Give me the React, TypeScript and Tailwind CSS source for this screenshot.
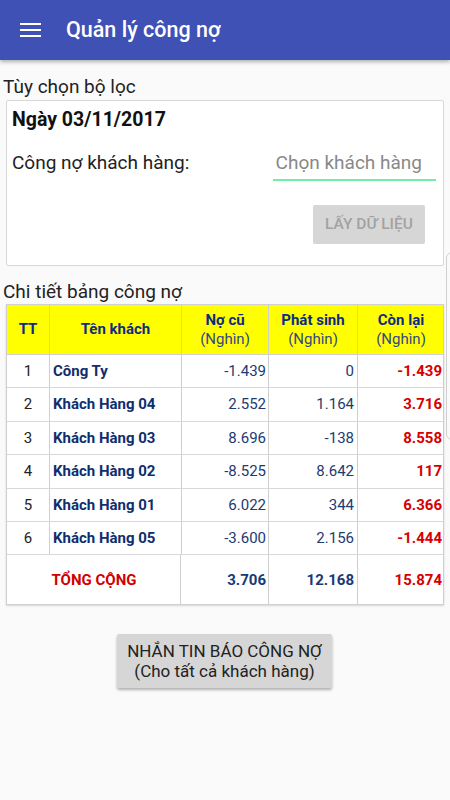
import React from "react";

const rows = [
  { tt: "1", name: "Công Ty", no: "-1.439", ps: "0", cl: "-1.439" },
  { tt: "2", name: "Khách Hàng 04", no: "2.552", ps: "1.164", cl: "3.716" },
  { tt: "3", name: "Khách Hàng 03", no: "8.696", ps: "-138", cl: "8.558" },
  { tt: "4", name: "Khách Hàng 02", no: "-8.525", ps: "8.642", cl: "117" },
  { tt: "5", name: "Khách Hàng 01", no: "6.022", ps: "344", cl: "6.366" },
  { tt: "6", name: "Khách Hàng 05", no: "-3.600", ps: "2.156", cl: "-1.444" },
];

export default function App() {
  return (
    <div className="relative w-[450px] h-[800px] overflow-hidden bg-[#fafafa] font-['Roboto',sans-serif]">
      {/* App bar */}
      <div className="h-[60px] bg-[#3f51b5] flex items-center shadow-[0_2px_4px_rgba(0,0,0,0.3)] relative z-10">
        <div className="ml-[20px] w-[21px] flex flex-col gap-[4px]">
          <div className="h-[2px] bg-white" />
          <div className="h-[2px] bg-white" />
          <div className="h-[2px] bg-white" />
        </div>
        <div className="ml-[25px] text-white text-[21.5px] font-medium leading-none">Quản lý công nợ</div>
      </div>

      <div className="pt-[16px] px-[6px]">
        <div className="text-[19px] leading-[22px] text-[#222] -ml-[3px]">Tùy chọn bộ lọc</div>
        <div className="mt-[2px] h-[166px] bg-white border border-[#d8d8d8] rounded-[2px] px-[5px] pt-[8px]">
          <div className="text-[19.5px] leading-[22px] font-bold text-[#111]">Ngày 03/11/2017</div>
          <div className="mt-[21px] flex items-start justify-between">
            <div className="text-[19px] leading-[22px] text-[#222]">Công nợ khách hàng:</div>
            <div className="mr-[2px] w-[163px] border-b-2 border-[#6ff0a6] pb-[3px] text-right">
              <span className="text-[19px] leading-[22px] text-[#888] pr-[14px]">Chọn khách hàng</span>
            </div>
          </div>
          <div className="mt-[24px] flex justify-end">
            <div className="mr-[13px] w-[112px] h-[39px] bg-[#d6d6d6] rounded-[2px] flex items-center justify-center text-[15.5px] font-medium text-[#a2a2a2]">
              LẤY DỮ LIỆU
            </div>
          </div>
        </div>

        <div className="mt-[15px] text-[19px] leading-[22px] text-[#222] -ml-[3px]">Chi tiết bảng công nợ</div>

        {/* Table */}
        <div className="mt-[1px] w-[438px] bg-white border border-[#cfcfcf] shadow-[0_1px_2px_rgba(0,0,0,0.15)]">
          <div className="grid grid-cols-[43px_132px_87px_89px_86px] h-[50px] bg-[#ffff00] text-[15px] text-[#0c2c86] border-b border-[#cfcfcf]">
            <div className="flex items-center justify-center font-bold border-r border-[#cfcfcf]">TT</div>
            <div className="flex items-center justify-center font-bold border-r border-[#cfcfcf]">Tên khách</div>
            {["Nợ cũ", "Phát sinh", "Còn lại"].map((h, i) => (
              <div key={h} className={`flex flex-col items-center justify-center leading-[19px] ${i < 2 ? "border-r border-[#cfcfcf]" : ""}`}>
                <span className="font-bold">{h}</span>
                <span className="text-[#34478a]">(Nghìn)</span>
              </div>
            ))}
          </div>
          {rows.map((r) => (
            <div key={r.tt} className="grid grid-cols-[43px_132px_87px_89px_86px] h-[33.4px] text-[15px] border-b border-[#d8d8d8]">
              <div className="flex items-center justify-center text-[#222] border-r border-[#cfcfcf]">{r.tt}</div>
              <div className="flex items-center pl-[3px] font-bold text-[#0f2e6e] border-r border-[#cfcfcf]">{r.name}</div>
              <div className="flex items-center justify-end pr-[2px] text-[#1d3a72] border-r border-[#cfcfcf]">{r.no}</div>
              <div className="flex items-center justify-end pr-[3px] text-[#1d3a72] border-r border-[#cfcfcf]">{r.ps}</div>
              <div className="flex items-center justify-end pr-[2px] font-bold text-[#d60000]">{r.cl}</div>
            </div>
          ))}
          <div className="grid grid-cols-[174px_88px_89px_86px] h-[49px] text-[15px] font-bold">
            <div className="flex items-center justify-center text-[#d20000] border-r border-[#cfcfcf] pl-[1px]">TỔNG CỘNG</div>
            <div className="flex items-center justify-end pr-[2px] text-[#173a78] border-r border-[#cfcfcf]">3.706</div>
            <div className="flex items-center justify-end pr-[3px] text-[#173a78] border-r border-[#cfcfcf]">12.168</div>
            <div className="flex items-center justify-end pr-[2px] text-[#d60000]">15.874</div>
          </div>
        </div>

        <div className="mt-[29px] flex justify-center">
          <div className="ml-[-1px] w-[215px] h-[54px] bg-[#d6d6d6] rounded-[2px] shadow-[0_2px_3px_rgba(0,0,0,0.3)] flex flex-col items-center justify-center text-[17px] leading-[20px] text-[#222]">
            <span>NHẮN TIN BÁO CÔNG NỢ</span>
            <span>(Cho tất cả khách hàng)</span>
          </div>
        </div>
      </div>

      {/* peeking panel edge at right */}
      <div className="absolute left-[446px] top-[252px] w-[10px] h-[188px] rounded-l-[6px] border border-[#d0d0d0]" />
    </div>
  );
}
